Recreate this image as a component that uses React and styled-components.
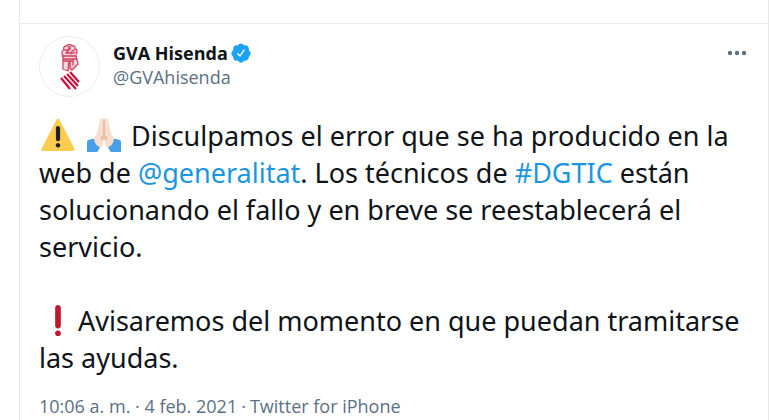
import React from 'react'
import styled, { createGlobalStyle } from 'styled-components';

const App = () => {
  return (
    <>
      <GlobalStyle/>
      <Column>
        <TopBar/>
        <Tweet>
          <Header>
            <Avatar href="#profile" aria-label="GVA Hisenda">
              <Crest/>
            </Avatar>
            <UserInfo>
              <NameRow>
                <Name href="#profile">GVA Hisenda</Name>
                <Verified/>
              </NameRow>
              <Handle href="#profile">@GVAhisenda</Handle>
            </UserInfo>
            <MoreButton type="button" aria-label="Más opciones">
              <svg viewBox="0 0 20 6" width="20" height="6" fill="#5b7083">
                <circle cx="3" cy="3" r="2.2"/>
                <circle cx="10" cy="3" r="2.2"/>
                <circle cx="17" cy="3" r="2.2"/>
              </svg>
            </MoreButton>
          </Header>
          <Text>
            <Warning/> <Hands/> Disculpamos el error que se ha producido en la web de <Link href="#generalitat">@generalitat</Link>. Los técnicos de <Link href="#dgtic">#DGTIC</Link> están solucionando el fallo y en breve se reestablecerá el servicio.
          </Text>
          <Text>
            <Exclamation/>Avisaremos del momento en que puedan tramitarse las ayudas.
          </Text>
          <Meta>
            <MetaLink href="#status">10:06 a. m. · 4 feb. 2021</MetaLink>
            <span>·</span>
            <MetaLink href="#source">Twitter for iPhone</MetaLink>
          </Meta>
        </Tweet>
      </Column>
    </>
  )
}

const Crest = () => (
  <svg viewBox="0 0 28 54" width="28" height="54" fill="none" stroke="#d0405f" strokeLinecap="round" strokeLinejoin="round">
    <path fill="#f6d3db" stroke="none" d="M7 15l1-8 5-3 5 2 3 6-1 14-5 5-7-3z"/>
    <path strokeWidth="1.3" d="M7 15c-2-2-1-4 1-5-1-2 0-4 2-4 2-2 5-2 6 0 2-1 4 1 3 3 2 0 3 3 1 5M9 10c2 1 4-1 5-2M12 7c2-1 3 0 2 2l-4 4h4l4-3M15 14l4-2"/>
    <path strokeWidth="1.3" d="M6 16h14M7 19h13M7 16v13l5 2 1-10M8 21h9M14 21v7l2 2 6-6-2-8M17 20v5"/>
    <g stroke="#c8103e" strokeWidth="2.2" strokeLinecap="butt">
      <path d="M14 32l9 10M11 34l11 12M8 36l12 13M5 38l9 11"/>
    </g>
  </svg>
)

const Verified = () => (
  <svg viewBox="0 0 24 24" width="22" height="22" fill="#1da1f2" role="img" aria-label="Cuenta verificada">
    <path d="M22.5 12.5c0-1.58-.875-2.95-2.148-3.6.154-.435.238-.905.238-1.4 0-2.21-1.71-3.998-3.818-3.998-.47 0-.92.084-1.336.25C14.818 2.415 13.51 1.5 12 1.5s-2.816.917-3.437 2.25c-.415-.165-.866-.25-1.336-.25-2.11 0-3.818 1.79-3.818 4 0 .494.083.964.237 1.4-1.272.65-2.147 2.018-2.147 3.6 0 1.495.782 2.798 1.942 3.486-.02.17-.032.34-.032.514 0 2.21 1.708 4 3.818 4 .47 0 .92-.086 1.335-.25.62 1.334 1.926 2.25 3.437 2.25 1.512 0 2.818-.916 3.437-2.25.415.163.865.248 1.336.248 2.11 0 3.818-1.79 3.818-4 0-.174-.012-.344-.033-.513 1.158-.687 1.943-1.99 1.943-3.484zm-6.616-3.334l-4.334 6.5c-.145.217-.382.334-.625.334-.143 0-.288-.04-.416-.126l-.115-.094-2.415-2.415c-.293-.293-.293-.768 0-1.06s.768-.294 1.06 0l1.77 1.767 3.825-5.74c.23-.345.696-.436 1.04-.207.346.23.44.696.21 1.04z"/>
  </svg>
)

const Warning = () => (
  <Emoji viewBox="0 0 36 36" role="img" aria-label="Advertencia">
    <path fill="#ffcc4d" d="M2.653 35C.811 35-.001 33.662.847 32.027L16.456 1.972c.849-1.635 2.238-1.635 3.087 0l15.609 30.056c.85 1.634.037 2.972-1.805 2.972H2.653z"/>
    <path fill="#231f20" d="M15.583 28.953c0-1.333 1.085-2.418 2.419-2.418 1.333 0 2.418 1.085 2.418 2.418 0 1.334-1.086 2.419-2.418 2.419-1.334 0-2.419-1.085-2.419-2.419zm.186-18.293c0-1.302.961-2.108 2.232-2.108 1.241 0 2.233.837 2.233 2.108v11.938c0 1.271-.992 2.108-2.233 2.108-1.271 0-2.232-.807-2.232-2.108V10.66z"/>
  </Emoji>
)

const Hands = () => (
  <Emoji viewBox="0 0 36 36" role="img" aria-label="Manos juntas">
    <path fill="#f7dece" d="M18 1c-2-1.500-4.500-1-4.700 2L11 15l-5 9v7l7 2 3.500-4L18 23l1.500 6 3.500 4 7-2v-7l-5-9-2.300-12c-.2-3-2.700-3.500-4.700-2z"/>
    <path fill="none" stroke="#dfa68f" strokeWidth="1.200" d="M18 2v21M15.500 19v4M20.500 19v4"/>
    <path fill="#4aa0e6" d="M0 36V25.500c0-1 .5-1.800 1.500-2.200L6 22c1-.3 1.700.2 1.800 1.200.3 3.300 2 5.800 4.700 7 1 .4 1.200 1.300.6 2.100L11 36zM36 36V25.500c0-1-.5-1.800-1.500-2.200L30 22c-1-.3-1.700.2-1.800 1.200-.3 3.300-2 5.800-4.700 7-1 .4-1.200 1.300-.6 2.100L25 36z"/>
  </Emoji>
)

const Exclamation = () => (
  <Emoji viewBox="0 0 36 36" role="img" aria-label="Exclamación">
    <g fill="#be1931">
      <circle cx="18" cy="32" r="3"/>
      <path d="M21 24c0 1.657-1.344 3-3 3-1.657 0-3-1.343-3-3V5c0-1.657 1.343-3 3-3 1.656 0 3 1.343 3 3v19z"/>
    </g>
  </Emoji>
)

const GlobalStyle = createGlobalStyle`
*{
  box-sizing: border-box;
}
body{
  margin: 0;
  background-color: white;
  color: #0f1419;
  font-family: "Open Sans", "Noto Sans", sans-serif;
  overflow: hidden;
}
a{
  text-decoration: none;
}
`;
const Column = styled.main`
margin: 0 1px 0 19px;
min-height: 100vh;
border-left: 1px solid #e6e9eb;
border-right: 1px solid #e6e9eb;
`;
const TopBar = styled.div`
height: 24px;
border-bottom: 1px solid #e6ebee;
`;
const Tweet = styled.article`
padding: 12px 19px 0;
`;
const Header = styled.header`
display: flex;
align-items: flex-start;
margin-bottom: 20px;
`;
const Avatar = styled.a`
display: flex;
align-items: center;
justify-content: center;
width: 61px;
height: 61px;
border: 1px solid #ebeef0;
border-radius: 50%;
`;
const UserInfo = styled.div`
flex: 1;
padding: 5px 0 0 13px;
line-height: 24px;
font-size: 18px;
`;
const NameRow = styled.div`
display: flex;
align-items: center;
gap: 2px;
`;
const Name = styled.a`
color: #0f1419;
font-weight: 700;
`;
const Handle = styled.a`
display: block;
color: #5b7083;
`;
const MoreButton = styled.button`
display: flex;
padding: 14px 2px;
border: none;
background: none;
cursor: pointer;
`;
const Text = styled.p`
margin: 0 0 37px;
font-family: "Noto Sans", "Open Sans", sans-serif;
font-size: 27px;
line-height: 37px;
&:last-of-type{
  margin-bottom: 18px;
}
`;
const Emoji = styled.svg`
width: 34px;
height: 34px;
margin: 0 3px 0 2px;
vertical-align: -6px;
`;
const Link = styled.a`
color: #1b95e0;
`;
const Meta = styled.div`
display: flex;
gap: 4px;
color: #5b7083;
font-size: 18px;
line-height: 24px;
`;
const MetaLink = styled.a`
color: inherit;
`;
export default App;
